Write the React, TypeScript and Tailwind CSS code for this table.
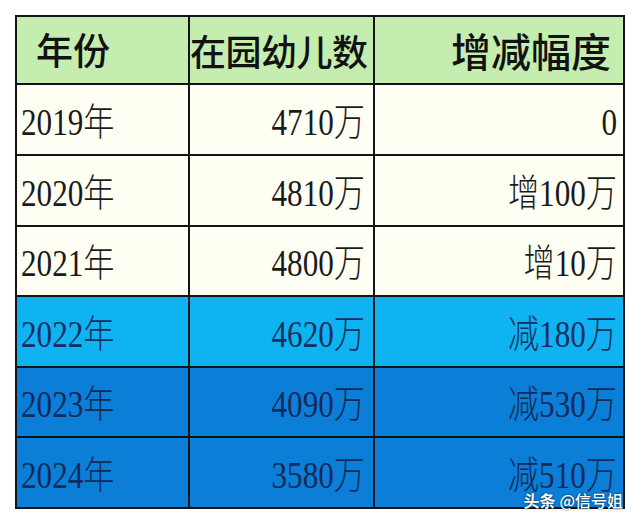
import React from 'react';

type Row = { year: string; count: string; change: string; tone: 'cream' | 'sky' | 'blue' };

const rows: Row[] = [
    { year: '2019年', count: '4710万', change: '0', tone: 'cream' },
    { year: '2020年', count: '4810万', change: '增100万', tone: 'cream' },
    { year: '2021年', count: '4800万', change: '增10万', tone: 'cream' },
    { year: '2022年', count: '4620万', change: '减180万', tone: 'sky' },
    { year: '2023年', count: '4090万', change: '减530万', tone: 'blue' },
    { year: '2024年', count: '3580万', change: '减510万', tone: 'blue' },
];

const toneClass = {
    cream: 'bg-[#fffff3] text-[#1a1a1a]',
    sky: 'bg-[#0fb3f1] text-[#15305e]',
    blue: 'bg-[#0b7ed7] text-[#132b58]',
};

const heights = ['h-[69px]', 'h-[69px]', 'h-[68px]', 'h-[69px]', 'h-[68px]', 'h-[69px]'];

function Num({ children, right }: { children: React.ReactNode; right?: boolean }) {
    return (
        <span
            className={`inline-block scale-x-[0.82] whitespace-nowrap text-[38px] leading-[28px] font-light ${right ? 'origin-right' : 'origin-left'}`}
            style={{ fontFamily: '"Liberation Serif", "Noto Sans CJK SC", serif' }}
        >
            {children}
        </span>
    );
}

export default function App() {
    const head = 'flex items-center bg-[#c5edb0] text-[#121212] font-medium';
    return (
        <div className="h-[523px] w-[640px] bg-white pt-[15px] pl-[15px]">
            <div className="relative w-[610px]">
                <div
                    className="grid grid-cols-[171px_183px_248px] gap-[2px] border-2 border-[#141414] bg-[#141414]"
                    style={{ fontFamily: '"Noto Sans CJK SC", sans-serif' }}
                >
                    <div className={`${head} h-[66px] pl-[19px] text-[37px]`}>年份</div>
                    <div className={`${head} h-[66px] whitespace-nowrap text-[36px] tracking-[-0.5px]`}>在园幼儿数</div>
                    <div className={`${head} h-[66px] justify-end pr-[12px] text-[40px]`}>增减幅度</div>

                    {rows.map((r, i) => (
                        <React.Fragment key={r.year}>
                            <div className={`${toneClass[r.tone]} ${heights[i]} flex items-center pl-[4px] pt-[4px]`}>
                                <Num>{r.year}</Num>
                            </div>
                            <div className={`${toneClass[r.tone]} ${heights[i]} flex items-center justify-end pr-[8px] pt-[4px]`}>
                                <Num right>{r.count}</Num>
                            </div>
                            <div className={`${toneClass[r.tone]} ${heights[i]} flex items-center justify-end pr-[6px] pt-[4px]`}>
                                <Num right>{r.change}</Num>
                            </div>
                        </React.Fragment>
                    ))}
                </div>

                <div
                    className="absolute right-[2px] bottom-[1px] flex items-center gap-[4px] text-[16px] leading-none text-white [text-shadow:0_0_2px_rgba(0,0,0,0.8)]"
                    style={{ fontFamily: '"Noto Sans CJK SC", sans-serif' }}
                >
                    <span className="font-bold">头条</span>
                    <span className="font-medium">@信号姐</span>
                </div>
            </div>
        </div>
    );
}
